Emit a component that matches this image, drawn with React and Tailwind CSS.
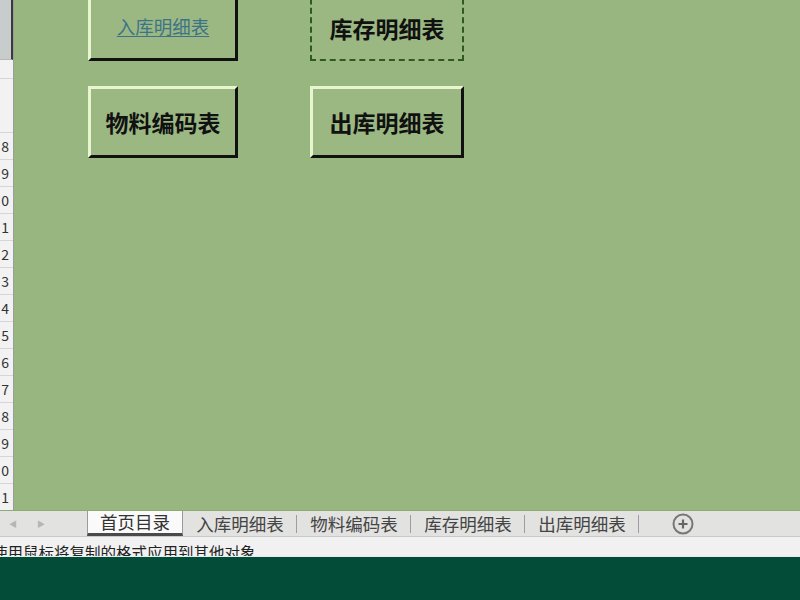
const FONT = { fontFamily: '"Noto Sans CJK SC", "Noto Sans", sans-serif' }

const rows = [8, 9, 10, 11, 12, 13, 14, 15, 16, 17, 18, 19, 20, 21]
const tabs = ['入库明细表', '物料编码表', '库存明细表', '出库明细表']

function RowHeader() {
  return (
    <div className="w-[14px] shrink-0 flex flex-col bg-[#f2f2f2] border-r border-[#9c9c9c] overflow-hidden">
      <div className="h-[60px] shrink-0 bg-[#c7cdcd] border-r-2 border-[#3a3a3a] border-b border-b-[#b8b8b8]" />
      <div className="h-[19px] shrink-0 border-b border-[#d6d6d6]" />
      <div className="h-[54px] shrink-0 border-b border-[#d6d6d6]" />
      {rows.map(n => (
        <div key={n} className="h-[27px] shrink-0 border-b border-[#d6d6d6] flex items-center justify-end pr-[4px] text-[14px] text-[#333] leading-none">
          {n % 10}
        </div>
      ))}
    </div>
  )
}

function BevelButton({ children, className = '' }) {
  return (
    <div className={`h-[72px] bg-[#9bb883] border-[3px] border-t-[#e8f6cf] border-l-[#e8f6cf] border-r-[#111] border-b-[#111] flex items-center justify-center ${className}`}>
      {children}
    </div>
  )
}

export default function App() {
  return (
    <div className="w-[800px] h-[600px] flex flex-col overflow-hidden bg-[#98b67f]" style={FONT}>
      <div className="h-[510px] shrink-0 flex">
        <RowHeader />
        <div className="flex-1 bg-[#98b67f] overflow-hidden">
          <div className="grid grid-cols-[150px_154px] gap-x-[72px] gap-y-[25px] ml-[74px] -mt-[11px]">
            <BevelButton>
              <span className="text-[18.5px] text-[#3d7388] underline underline-offset-2 pt-[4px]">入库明细表</span>
            </BevelButton>
            <div className="h-[72px] bg-[#9bb883] border-2 border-dashed border-[#2c5a22] flex items-center justify-center">
              <span className="text-[23px] font-bold text-[#111] pt-[6px]">库存明细表</span>
            </div>
            <BevelButton>
              <span className="text-[23px] font-bold text-[#111]">物料编码表</span>
            </BevelButton>
            <BevelButton>
              <span className="text-[23px] font-bold text-[#111]">出库明细表</span>
            </BevelButton>
          </div>
        </div>
      </div>

      <div className="h-[27px] shrink-0 bg-[#e2e2e0] border-t border-[#8fa87a] border-b border-b-[#c9c9c9] flex items-stretch">
        <div className="w-[87px] shrink-0 flex items-center gap-[20px] pl-[9px] text-[8px] text-[#b5b5b5]">
          <span>◀</span>
          <span>▶</span>
        </div>
        <div className="w-[96px] shrink-0 bg-[#fafafa] border-x border-[#9a9a9a] border-b-[3px] border-b-[#4a4a4a] flex items-center justify-center text-[17.5px] text-[#333] leading-none">
          首页目录
        </div>
        {tabs.map(t => (
          <div key={t} className="flex items-center">
            <div className="w-[113px] flex items-center justify-center text-[17.5px] text-[#444] leading-none pl-[1px]">
              {t}
            </div>
            <div className="w-px h-[18px] bg-[#9e9e9e]" />
          </div>
        ))}
        <div className="ml-[33px] flex items-center">
          <svg width="22" height="22" viewBox="0 0 22 22">
            <circle cx="11" cy="11" r="9.5" fill="none" stroke="#777" strokeWidth="2" />
            <path d="M11 6.5v9M6.5 11h9" stroke="#666" strokeWidth="2.2" />
          </svg>
        </div>
      </div>

      <div className="h-[20px] shrink-0 bg-[#f1f1f1] overflow-hidden border-b border-[#dfeeee]">
        <div className="-ml-[8px] pt-[8px] text-[15.5px] leading-[15.5px] text-[#222] whitespace-nowrap">
          使用鼠标将复制的格式应用到其他对象
        </div>
      </div>

      <div className="flex-1 bg-[#034d38]" />
    </div>
  )
}
